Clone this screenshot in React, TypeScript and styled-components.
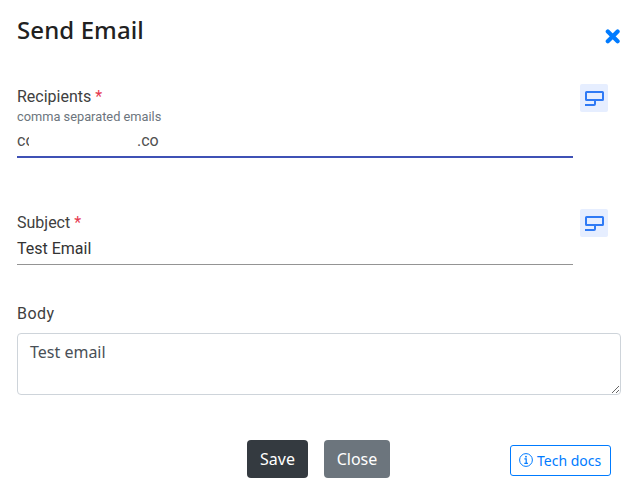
import React from 'react'
import styled, { createGlobalStyle } from 'styled-components'

const GlobalStyle = createGlobalStyle`
  * {
    box-sizing: border-box;
  }
  body {
    margin: 0;
    background: #fff;
    color: #212529;
    font-family: 'Noto Sans', 'Open Sans', sans-serif;
  }
`

const VariableIcon: React.FC = () => (
  <svg width="20" height="16" viewBox="0 0 20 16" fill="none" stroke="#2f7af5" strokeWidth="2">
    <rect x="2" y="2" width="17" height="8" rx="0.6" />
    <path d="M11 10v4q0 1-1 1H1" />
  </svg>
)

const CloseIcon: React.FC = () => (
  <svg width="16" height="16" viewBox="0 0 16 16" stroke="#007bff" strokeWidth="4.2" strokeLinecap="round">
    <path d="M2.8 3.5l9.8 9.8M12.6 3.5l-9.8 9.8" />
  </svg>
)

const InfoIcon: React.FC = () => (
  <svg width="14" height="14" viewBox="0 0 14 14" fill="none" stroke="#007bff">
    <circle cx="7" cy="7" r="6.4" strokeWidth="1" />
    <path d="M5.4 5.8H7.2v4.4M5.3 10.4h3.6" strokeWidth="1.2" />
    <circle cx="7" cy="3.7" r="0.9" fill="#007bff" stroke="none" />
  </svg>
)

const App: React.FC = () => {
  return (
    <>
      <GlobalStyle />
      <StyledDialog>
        <StyledHeader>
          <StyledTitle>Send Email</StyledTitle>
          <StyledCloseButton aria-label="Close dialog">
            <CloseIcon />
          </StyledCloseButton>
        </StyledHeader>
        <StyledFieldRow height={125}>
          <StyledField>
            <StyledLabel lineHeight={26}>
              Recipients <StyledRequired>*</StyledRequired>
            </StyledLabel>
            <StyledHint>comma separated emails</StyledHint>
            <StyledValue height={28} focused>
              <StyledClipped>co</StyledClipped>
              <span>.co</span>
            </StyledValue>
          </StyledField>
          <StyledIconButton aria-label="Insert variable">
            <VariableIcon />
          </StyledIconButton>
        </StyledFieldRow>
        <StyledFieldRow height={93}>
          <StyledField>
            <StyledLabel lineHeight={28}>
              Subject <StyledRequired>*</StyledRequired>
            </StyledLabel>
            <StyledValue height={32}>Test Email</StyledValue>
          </StyledField>
          <StyledIconButton aria-label="Insert variable">
            <VariableIcon />
          </StyledIconButton>
        </StyledFieldRow>
        <StyledBodyLabel htmlFor="body">Body</StyledBodyLabel>
        <StyledTextarea id="body" defaultValue="Test email" />
        <StyledFooter>
          <StyledButton color="#343a40" width={61}>Save</StyledButton>
          <StyledButton color="#6c757d" width={66}>Close</StyledButton>
          <StyledDocsButton>
            <InfoIcon />
            Tech docs
          </StyledDocsButton>
        </StyledFooter>
      </StyledDialog>
    </>
  )
}

const StyledDialog = styled.div`
  width: 637px;
  height: 502px;
  padding: 0 16px 0 17px;
  overflow: hidden;
`

const StyledHeader = styled.div`
  display: flex;
  height: 84px;
  justify-content: space-between;
`

const StyledTitle = styled.h2`
  margin: 14px 0 0;
  color: #212121;
  font-size: 24px;
  font-weight: 500;
  letter-spacing: 0.1px;
  line-height: 32px;
`

const StyledCloseButton = styled.button`
  width: 16px;
  height: 16px;
  margin: 28px 0 0;
  padding: 0;
  border: 0;
  background: none;
  svg {
    display: block;
  }
`

const StyledFieldRow = styled.div<{ height: number }>`
  display: flex;
  align-items: flex-start;
  gap: 7px;
  height: ${(props) => props.height}px;
`

const StyledField = styled.div`
  width: 556px;
  font-family: Roboto, sans-serif;
`

const StyledLabel = styled.div<{ lineHeight: number }>`
  height: 24px;
  color: #404040;
  font-size: 16px;
  line-height: ${(props) => props.lineHeight}px;
`

const StyledRequired = styled.span`
  color: #e63950;
`

const StyledHint = styled.div`
  height: 20px;
  color: #6c757d;
  font-size: 12.8px;
  line-height: 17px;
`

const StyledValue = styled.div<{ height: number; focused?: boolean }>`
  display: flex;
  height: ${(props) => props.height + (props.focused ? 2 : 0)}px;
  border-bottom: ${(props) => (props.focused ? '2px solid #3f51b5' : '1px solid #949494')};
  color: ${(props) => (props.focused ? '#505050' : '#333')};
  font-size: 16px;
  line-height: ${(props) => (props.focused ? 25 : 31)}px;
`

const StyledClipped = styled.span`
  width: 12px;
  margin-right: 108px;
  overflow: hidden;
`

const StyledIconButton = styled.button`
  display: flex;
  align-items: center;
  justify-content: center;
  width: 28px;
  height: 28px;
  padding: 0;
  border: 0;
  border-radius: 2px;
  background: #e6eeff;
`

const StyledBodyLabel = styled.label`
  display: block;
  height: 31px;
  color: #404040;
  font-family: Roboto, sans-serif;
  font-size: 16px;
  letter-spacing: 0.5px;
  line-height: 23px;
`

const StyledTextarea = styled.textarea`
  display: block;
  width: 604px;
  height: 62px;
  padding: 6px 12px;
  border: 1px solid #ced4da;
  border-radius: 4px;
  outline: 0;
  background: #fff;
  color: #495057;
  font-family: 'Noto Sans', sans-serif;
  font-size: 16px;
  line-height: 24px;
`

const StyledFooter = styled.div`
  display: flex;
  gap: 16px;
  margin-top: 45px;
  padding-left: 230px;
`

const StyledButton = styled.button<{ color: string; width: number }>`
  width: ${(props) => props.width}px;
  height: 38px;
  padding: 0;
  border: 0;
  border-radius: 4px;
  background: ${(props) => props.color};
  color: #fff;
  font-family: 'Noto Sans', sans-serif;
  font-size: 16px;
  line-height: 24px;
`

const StyledDocsButton = styled.button`
  display: flex;
  align-items: center;
  gap: 4px;
  width: 101px;
  height: 31px;
  margin: 5px 10px 0 auto;
  padding: 0 0 0 8px;
  border: 1px solid #007bff;
  border-radius: 3px;
  background: #fff;
  color: #007bff;
  font-family: 'Noto Sans', sans-serif;
  font-size: 14px;
  line-height: 21px;
  white-space: nowrap;
  svg {
    flex: none;
    margin-top: -1px;
  }
`

export default App
